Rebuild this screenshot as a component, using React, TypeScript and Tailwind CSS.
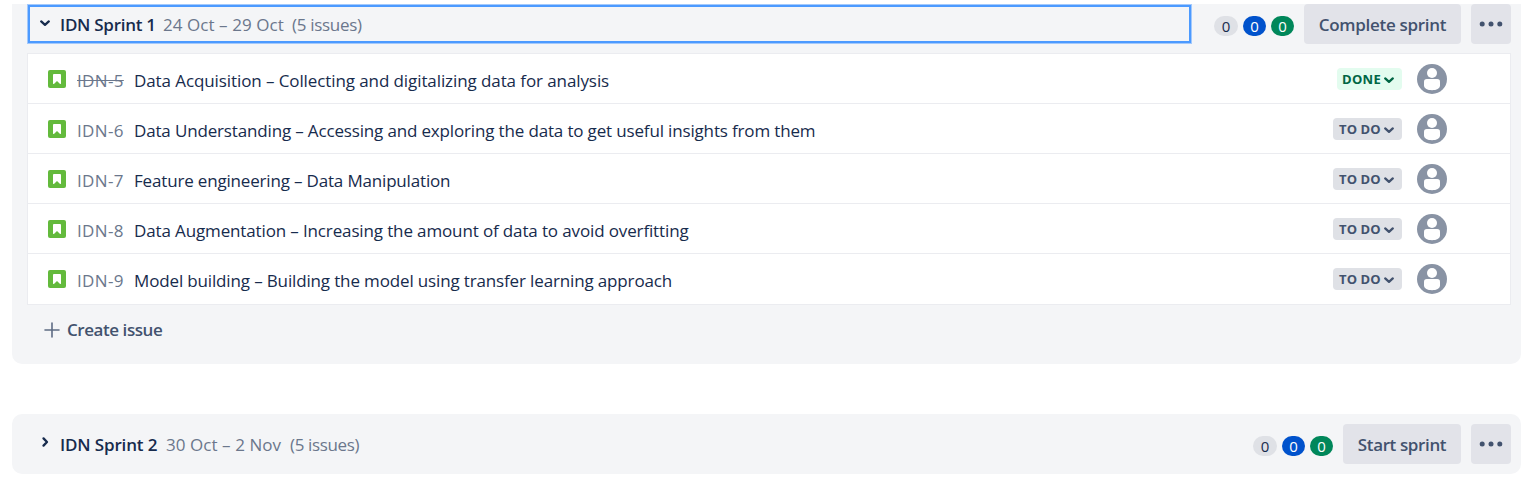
import React from "react";

type Status = "DONE" | "TO DO";
type Issue = { id: string; title: string; status: Status; spacing: string };

const issues: Issue[] = [
  { id: "IDN-5", title: "Data Acquisition – Collecting and digitalizing data for analysis", status: "DONE", spacing: "tracking-[-0.094px]" },
  { id: "IDN-6", title: "Data Understanding – Accessing and exploring the data to get useful insights from them", status: "TO DO", spacing: "tracking-[-0.157px]" },
  { id: "IDN-7", title: "Feature engineering – Data Manipulation", status: "TO DO", spacing: "tracking-[-0.175px]" },
  { id: "IDN-8", title: "Data Augmentation – Increasing the amount of data to avoid overfitting", status: "TO DO", spacing: "tracking-[-0.135px]" },
  { id: "IDN-9", title: "Model building – Building the model using transfer learning approach", status: "TO DO", spacing: "tracking-[-0.147px]" },
];

function StoryIcon() {
  return (
    <svg className="size-[18px] shrink-0" viewBox="0 0 18 18">
      <rect width="18" height="18" rx="2" fill="#63ba3c" />
      <path d="M5 4.9a.9.9 0 0 1 .9-.9h6.2a.9.9 0 0 1 .9.9v8.4a.7.7 0 0 1-1.2.5L9 11.1l-2.8 2.7a.7.7 0 0 1-1.2-.5z" fill="#fff" />
    </svg>
  );
}

function Chevron({ className, right = false }: { className: string; right?: boolean }) {
  return (
    <svg className={className} viewBox="0 0 12 12" fill="none" stroke="currentColor" strokeWidth="2.3" strokeLinecap="round" strokeLinejoin="round">
      <path d={right ? "M4.5 2.4 8 6 4.5 9.6" : "M2.2 4.4 6 7.8 9.8 4.4"} />
    </svg>
  );
}

function Avatar() {
  return (
    <svg className="ml-[15px] size-[30px] shrink-0" viewBox="0 0 30 30">
      <circle cx="15" cy="15" r="15" fill="#8993a4" />
      <circle cx="15" cy="9" r="5" fill="#fff" />
      <path d="M9.8 15h10.4a2.8 2.8 0 0 1 2.8 2.8v3.8c0 3-3.6 4.7-8 4.7s-8-1.7-8-4.7v-3.8A2.8 2.8 0 0 1 9.8 15z" fill="#fff" />
    </svg>
  );
}

function Badges() {
  return (
    <div className="mt-[12px] flex h-5 gap-[5px] text-[15px] leading-[21px]">
      <span className="w-6 rounded-full bg-[#dfe1e6] text-center text-[#172b4d]">0</span>
      <span className="w-[23px] rounded-full bg-[#0052cc] text-center text-white">0</span>
      <span className="w-[23px] rounded-full bg-[#00875a] text-center text-white">0</span>
    </div>
  );
}

function MoreButton() {
  return (
    <button className="ml-[10px] flex h-10 w-10 items-center justify-center rounded-[4px] bg-[#e2e3e9]">
      <svg className="h-6 w-6" viewBox="0 0 24 24" fill="#42526e">
        <circle cx="3.2" cy="12" r="2.5" />
        <circle cx="12" cy="12" r="2.5" />
        <circle cx="20.8" cy="12" r="2.5" />
      </svg>
    </button>
  );
}

function IssueRow({ issue }: { issue: Issue }) {
  const done = issue.status === "DONE";
  return (
    <li className="flex h-[50px] items-center border-b border-[#ebecf0] pl-5 pr-[63px] last:h-[51px] last:pb-px">
      <StoryIcon />
      <span className={done ? "ml-[11px] mt-[4px] w-[57px] tracking-[0.35px] text-[#6b778c] line-through" : "ml-[11px] mt-[4px] w-[57px] tracking-[0.35px] text-[#6b778c]"}>{issue.id}</span>
      <span className={"mt-[4px] flex-1 whitespace-nowrap text-[#172b4d] " + issue.spacing}>{issue.title}</span>
      <span className={done
        ? "flex h-[22px] w-[65px] items-center rounded-[4px] bg-[#e3fcef] pl-[5px] text-[13px] font-bold text-[#006644]"
        : "flex h-[22px] w-[69px] items-center rounded-[4px] bg-[#dfe1e6] pl-[6px] text-[13px] font-bold text-[#42526e]"}>
        <span className={done ? "w-[41px] tracking-[0.3px]" : "w-[44px] tracking-[0.1px]"}>{issue.status}</span>
        <Chevron className="mt-[3px] size-3" />
      </span>
      <Avatar />
    </li>
  );
}

export default function App() {
  return (
    <main className="h-[482px] overflow-hidden bg-white pl-3 pr-2 pt-1 font-['Open_Sans','Noto_Sans',sans-serif] text-[17px] leading-6">
      <section className="h-[360px] rounded-b-[10px] bg-[#f4f5f7] pl-[15px] pr-[10px]">
        <header className="flex h-10">
          <div className="flex h-10 w-[1165px] items-center border border-[#a3c9fc] pl-[2px] shadow-[inset_0_0_0_2px_#4c9aff]">
            <Chevron className="-mt-[3px] ml-[9px] size-3 text-[#172b4d]" />
            <h2 className="ml-[9px] mt-[2px] w-[103px] whitespace-nowrap font-semibold tracking-[-0.27px] text-[#172b4d]">IDN Sprint 1</h2>
            <span className="mt-[2px] w-[129px] whitespace-nowrap tracking-[0.06px] text-[#6b778c]">24 Oct – 29 Oct</span>
            <span className="mt-[2px] whitespace-nowrap tracking-[-0.3px] text-[#6b778c]">(5 issues)</span>
          </div>
          <div className="ml-auto flex">
            <Badges />
            <button className="ml-[10px] h-10 w-[157px] whitespace-nowrap rounded-[4px] bg-[#e2e3e9] pt-px font-semibold tracking-[-0.3px] text-[#42526e]">Complete sprint</button>
            <MoreButton />
          </div>
        </header>
        <ul className="mt-[9px] border border-b-0 border-[#ebecf0] bg-white">
          {issues.map((issue) => <IssueRow key={issue.id} issue={issue} />)}
        </ul>
        <button className="mt-[13px] flex items-center pl-[17px] font-semibold tracking-[-0.44px] text-[#42526e]">
          <svg className="-mt-px size-4" viewBox="0 0 16 16" stroke="#5e6c84" strokeWidth="1.6" strokeLinecap="round">
            <path d="M8 1v14M1 8h14" />
          </svg>
          <span className="ml-[7px] whitespace-nowrap">Create issue</span>
        </button>
      </section>
      <section className="mt-[50px] flex h-[60px] rounded-[10px] bg-[#f4f5f7] pl-[15px] pr-[10px] pt-[10px]">
        <div className="flex h-10 items-center pl-3">
          <Chevron right className="-mt-[5px] size-3 text-[#172b4d]" />
          <h2 className="ml-[9px] mt-[2px] w-[106px] whitespace-nowrap font-semibold tracking-[-0.15px] text-[#172b4d]">IDN Sprint 2</h2>
          <span className="mt-[2px] w-[124px] whitespace-nowrap tracking-[0.06px] text-[#6b778c]">30 Oct – 2 Nov</span>
          <span className="mt-[2px] whitespace-nowrap tracking-[-0.35px] text-[#6b778c]">(5 issues)</span>
        </div>
        <div className="ml-auto flex">
          <Badges />
          <button className="ml-[10px] h-10 w-[118px] whitespace-nowrap rounded-[4px] bg-[#e2e3e9] pt-px font-semibold tracking-[-0.38px] text-[#42526e]">Start sprint</button>
          <MoreButton />
        </div>
      </section>
    </main>
  );
}
